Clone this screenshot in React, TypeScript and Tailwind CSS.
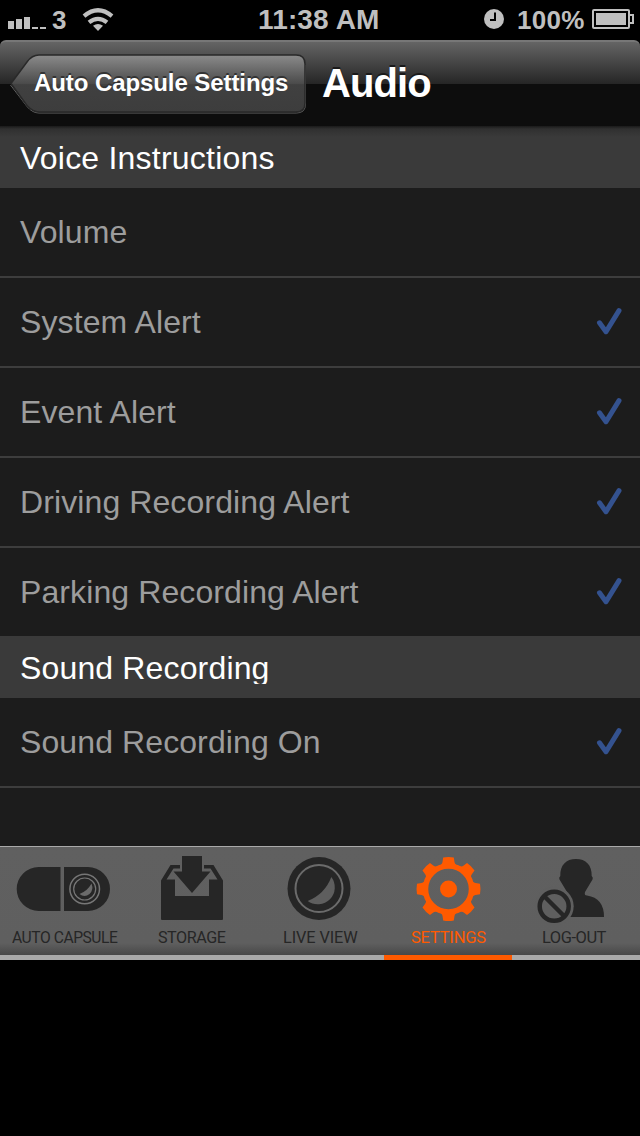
import React from "react";

const sans = "font-['Liberation_Sans',Arial,sans-serif]";

function StatusBar() {
  return (
    <div className="flex h-10 shrink-0 items-center bg-black text-[26px] leading-10 font-bold text-[#bfbfbf]">
      <svg width="120" height="40" viewBox="0 0 120 40" fill="#bfbfbf" className="shrink-0">
        <path d="M8 21h6v8H8zM16 19h6v10h-6zM24 17h6v12h-6zM32 27h6v2h-6zM40 27h6v2h-6z" />
        <text x="52" y="29" fontSize="26" fontWeight="bold">3</text>
        <path d="M98 31l-5-5.200q5-3.600 10 0z" />
        <path d="M89 22.400q9-7.200 18 0M84 16.200q14-11.800 28 0" fill="none" stroke="#bfbfbf" strokeWidth="4.200" />
      </svg>
      <span className="ml-[138px] w-[123px] text-[28px] tracking-[0.150px] whitespace-nowrap">11:38 AM</span>
      <svg width="24" height="24" viewBox="0 0 24 24" className="ml-[101px] shrink-0">
        <circle cx="12" cy="11" r="10" fill="#bfbfbf" />
        <path d="M13 4.500V12H8" fill="none" stroke="#000" strokeWidth="2" />
      </svg>
      <span className="ml-[11px] w-[75px] shrink-0 whitespace-nowrap tracking-[0.3px]">100%</span>
      <svg width="48" height="24" viewBox="0 0 48 24" className="shrink-0">
        <rect x="1" y="2" width="36" height="18" rx="1" fill="none" stroke="#bfbfbf" strokeWidth="2" />
        <path d="M4 5h30v12H4z" fill="#bfbfbf" />
        <path d="M38 7h3v8h-3" fill="none" stroke="#bfbfbf" strokeWidth="2" />
      </svg>
    </div>
  );
}

function NavBar() {
  return (
    <div className="flex h-[86px] shrink-0 items-start rounded-t-[6px] border-t-2 border-[#777] bg-[linear-gradient(180deg,#646464_0px,#252525_42px,#0d0d0d_42px,#0d0d0d_100%)] text-white">
      <div className="relative mt-3 ml-[10px] h-[62px] w-[298px] shrink-0">
        <svg width="298" height="62" viewBox="0 0 298 62" className="absolute inset-0">
          <defs>
            <linearGradient id="back" x1="0" y1="0" x2="0" y2="1">
              <stop offset="0" stopColor="#8b8b8b" />
              <stop offset="0.500" stopColor="#4b4b4b" />
              <stop offset="0.520" stopColor="#404040" />
              <stop offset="1" stopColor="#3d3d3d" />
            </linearGradient>
          </defs>
          <path d="M0.500 31L17 52.500Q22.500 59 29 59H286.500Q295.500 59 295.500 50V11" stroke="#666" strokeWidth="1" fill="none" />
          <path d="M1 29.500L17 8Q22 1 29 1H286Q295 1 295 10V49Q295 58 286 58H29Q23 58 17 51.500Z" fill="url(#back)" stroke="#292929" strokeWidth="1.500" />
        </svg>
        <span className="relative ml-6 block w-[262px] text-[24px] leading-[58px] font-bold tracking-[-0.080px] whitespace-nowrap [text-shadow:0_-2px_0_#333]">Auto Capsule Settings</span>
      </div>
      <h1 className="ml-[14px] text-[40px] leading-[83px] font-bold tracking-[-0.900px] whitespace-nowrap [text-shadow:0_-2px_0_#1a1a1a]">Audio</h1>
    </div>
  );
}

function Section({ title, first }: { title: string; first?: boolean }) {
  return (
    <div className={`flex h-[62px] shrink-0 items-start pl-5 text-[32px] leading-[62px] text-white ${first ? "bg-[linear-gradient(180deg,#1a1a1a_0px,#303030_3px,#3a3a3a_11px)] tracking-[0.220px]" : "bg-[#3a3a3a] tracking-[0.150px]"}`}>
      <div className={first ? "" : "h-12 overflow-hidden"}>
        <span className="block pt-px">{title}</span>
      </div>
    </div>
  );
}

function Row({ label, checked = true, last }: { label: string; checked?: boolean; last?: boolean }) {
  return (
    <div className={`flex shrink-0 items-center justify-between border-[#3d3d3d] pr-[16px] pl-5 text-[32px] leading-[88px] tracking-[0.100px] text-[#9d9d9d] ${last ? "h-[88px]" : "h-[90px] border-b-2"}`}>
      <span>{label}</span>
      {checked && (
        <svg width="30" height="32" viewBox="0 0 30 32" fill="none" stroke="#34528f" strokeWidth="5" strokeLinecap="round" strokeLinejoin="round">
          <path d="M5.500 16.800L12 25.700L25 4.600" />
        </svg>
      )}
    </div>
  );
}

const icons: Record<string, React.ReactNode> = {
  "AUTO CAPSULE": (
    <>
      <path d="M60.500 21H38.700a22 22 0 0 0 0 44H60.500zM64 21H88a22 22 0 0 1 0 44H64z" />
      <g fill="none" stroke="#777">
        <circle cx="84.700" cy="43" r="14.800" strokeWidth="1.500" />
        <circle cx="84.700" cy="43" r="11" strokeWidth="1.200" />
      </g>
      <path d="M91.500 37.500Q94 44 89.500 48Q84.500 52 79.500 48Q87.500 45 91.500 37.500Z" fill="#6b6b6b" />
    </>
  ),
  STORAGE: (
    <>
      <path d="M33 34.500L42.500 19H52V22.500H45.500L38.500 33.500H47V50H81V33.500H89.500L82.500 22.500H76V19H85.500L95 34.500V73a1 1 0 0 1-1 1H34a1 1 0 0 1-1-1z" />
      <path d="M54 10H74V25.500H82.500L64 47L45.500 25.500H54z" />
    </>
  ),
  "LIVE VIEW": (
    <>
      <circle cx="63" cy="42.500" r="31.500" />
      <circle cx="63" cy="42.500" r="23.500" fill="none" stroke="#6b6b6b" strokeWidth="2" />
      <path d="M75.300 31A17 17 0 0 1 51.700 55Q69 48 75.300 31Z" fill="#5e5e5e" />
    </>
  ),
  SETTINGS: (
    <>
      <g transform="translate(64.500 43)">
        <circle r="23" fill="none" stroke="#ff5a00" strokeWidth="5.500" />
        {[0, 45, 90, 135, 180, 225, 270, 315].map((a) => (
          <path key={a} transform={`rotate(${a})`} d="M-11 -22Q-6.500 -24-6-27L-5.300-31.500Q0-32.500 5.300-31.500L6-27Q6.500-24 11-22z" />
        ))}
        <circle r="8.500" />
      </g>
    </>
  ),
  "LOG-OUT": (
    <>
      <path d="M64 13C74 13 80 19 79.700 30Q81.500 31.500 80.500 33.500L73 46Q72 49.500 75 49.500Q92 52 92 71H55V46L47.500 33.500Q46.500 31.500 48.300 30C48 19 54 13 64 13z" />
      <circle cx="42.200" cy="60.300" r="19.500" fill="#5f5f5f" />
      <circle cx="42.200" cy="60.300" r="14.500" fill="none" stroke="#262626" strokeWidth="4.500" />
      <path d="M32.500 50.500L52 70" stroke="#262626" strokeWidth="4.500" />
    </>
  ),
};

const tabs = [
  { name: "AUTO CAPSULE", pos: "ml-[12px] tracking-[-0.5px] scale-x-[0.92]" },
  { name: "STORAGE", pos: "ml-[30px] tracking-[-0.5px] scale-x-[0.95]" },
  { name: "LIVE VIEW", pos: "ml-[27px] tracking-[-0.1px] scale-x-[0.96]" },
  { name: "SETTINGS", pos: "ml-[27px] tracking-[-0.2px] scale-x-[0.97]" },
  { name: "LOG-OUT", pos: "ml-[30px] tracking-[-0.5px] scale-x-[0.97]" },
];

function TabBar() {
  return (
    <nav className="flex h-[114px] shrink-0 border-t border-[#aaa]">
      {tabs.map(({ name, pos }) => {
        const active = name === "SETTINGS";
        return (
          <div key={name} className={`flex w-32 flex-col border-b-[5px] bg-[linear-gradient(180deg,#606060_0px,#5f5f5f_96px,#484848_108px)] ${active ? "border-[#ff5a00] text-[#ff5a00]" : "border-[#a9a9a9] text-[#262626]"}`}>
            <svg width="128" height="78" viewBox="0 1 128 78" fill={active ? "#ff5a00" : "#262626"} className="block shrink-0">{icons[name]}</svg>
            <span className={`origin-left font-['Roboto',sans-serif] text-[17px] leading-[24px] whitespace-nowrap ${pos}`}>{name}</span>
          </div>
        );
      })}
    </nav>
  );
}

export default function App() {
  return (
    <div className={`flex h-[1136px] w-[640px] flex-col overflow-hidden bg-black ${sans}`}>
      <StatusBar />
      <NavBar />
      <main className="flex h-[720px] shrink-0 flex-col bg-[#1c1c1c]">
        <Section title="Voice Instructions" first />
        <Row label="Volume" checked={false} />
        <Row label="System Alert" />
        <Row label="Event Alert" />
        <Row label="Driving Recording Alert" />
        <Row label="Parking Recording Alert" last />
        <Section title="Sound Recording" />
        <Row label="Sound Recording On" />
      </main>
      <TabBar />
    </div>
  );
}
